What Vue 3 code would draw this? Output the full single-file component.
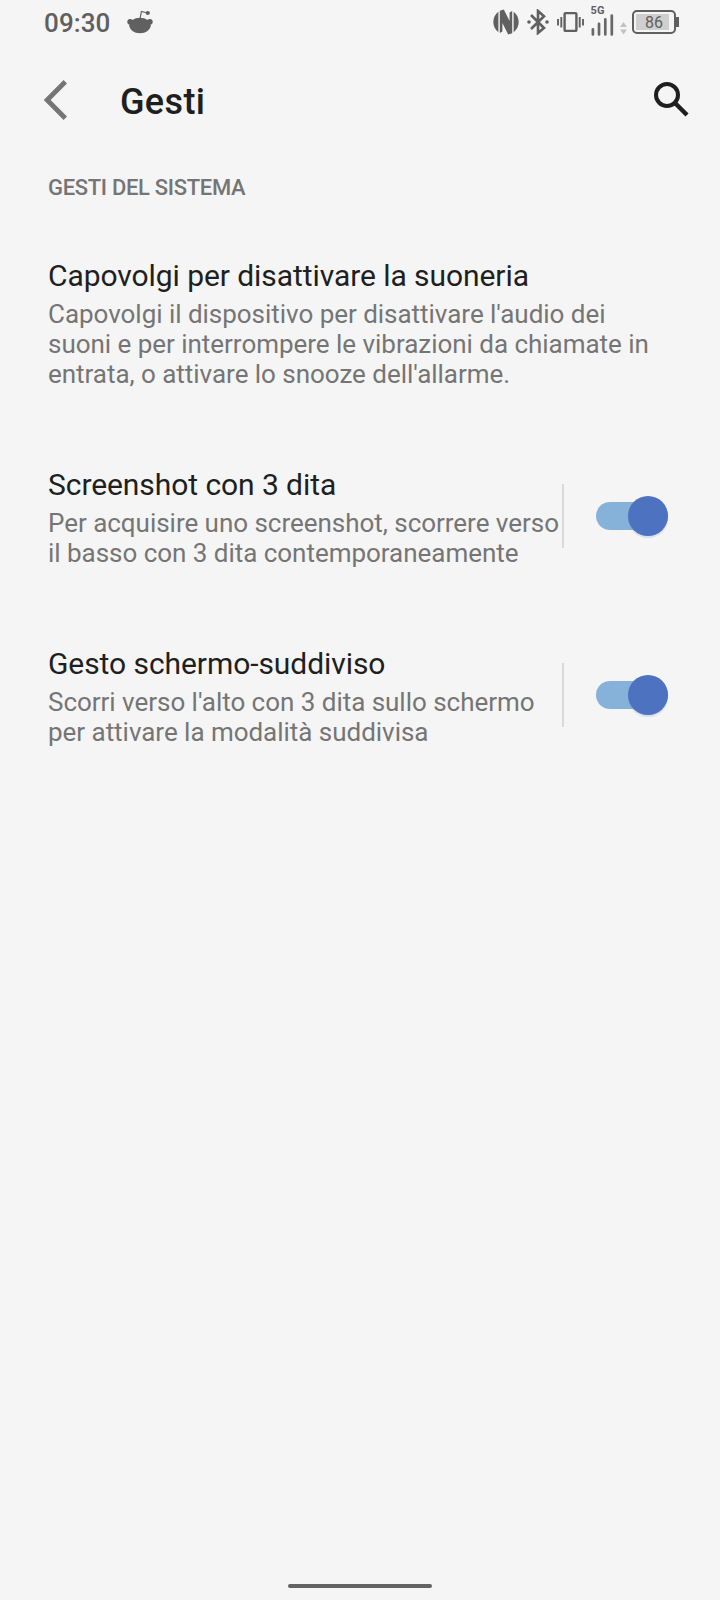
<template>
  <div class="screen">
    <header class="status-bar">
      <span class="clock">09:30</span>
      <svg class="reddit" width="26" height="24" viewBox="0 0 26 24">
        <path d="M13 9 L14.4 1.5 L20.5 3" fill="none" stroke="#606060" stroke-width="1.2" />
        <circle cx="20.8" cy="3" r="2.1" />
        <circle cx="3.2" cy="11.8" r="2.9" />
        <circle cx="22.8" cy="11.8" r="2.9" />
        <ellipse cx="13" cy="15.5" rx="10.8" ry="7.7" />
      </svg>

      <div class="status-icons">
        <svg width="26" height="26" viewBox="0 0 26 26">
          <path d="M5.4 2.8 A12.8 12.8 0 0 0 5.4 23.2 Z" />
          <path d="M20.6 2.8 A12.8 12.8 0 0 1 20.6 23.2 Z" />
          <path d="M6.8 1.8 L10.8 .5 L16.6 12 V3.5 L19.2 2 V24.2 L15.2 25.5 L9.4 14 V22.5 L6.8 24 Z" />
        </svg>
        <svg class="bluetooth" width="22" height="26" viewBox="0 0 22 26">
          <path
            d="M4 6 L17 19 L11 24 V2 L17 7.2 L4 20"
            fill="none" stroke="#606060" stroke-width="2.6"
          />
          <circle cx="2" cy="13" r="1.8" />
          <circle cx="20" cy="13" r="1.8" />
        </svg>
        <svg class="vibrate" width="27" height="26" viewBox="0 0 27 26">
          <rect x="7.6" y="4.1" width="11.8" height="17.8" rx="1" fill="none" stroke="#606060" stroke-width="2.4" />
          <path d="M1 10 V16.5 M4.3 8 V18.5 M22.7 8 V18.5 M26 10 V16.5" stroke="#606060" stroke-width="1.9" />
        </svg>
        <div class="signal">
          <span class="network">5G</span>
          <svg width="23" height="22" viewBox="0 0 23 22">
            <path d="M1.9 15.3 V20.5 M8 9.8 V20.5 M14.3 5.4 V20.5 M20.8 1.5 V20.5" stroke="#686868" stroke-width="2.7" stroke-linecap="round" />
          </svg>
        </div>
        <svg class="data" width="7" height="13" viewBox="0 0 7 13">
          <path d="M0 5 L3.5 0 L7 5 Z M0 7.5 H7 L3.5 12.5 Z" fill="#c2c2c2" />
        </svg>
        <div class="battery">
          <span class="level">86</span>
        </div>
        <span class="nub"></span>
      </div>
    </header>

    <nav class="toolbar">
      <svg width="24" height="40" viewBox="0 0 24 40">
        <path d="M21.3 1.7 L3.2 20 L21.3 38.3" fill="none" stroke="#757575" stroke-width="4.8" />
      </svg>
      <h1>Gesti</h1>
      <svg width="36" height="36" viewBox="0 0 36 36">
        <circle cx="13" cy="13" r="11" fill="none" stroke="#1f1f1f" stroke-width="4" />
        <path d="M20.5 20.5 L33 33" stroke="#1f1f1f" stroke-width="4.4" />
      </svg>
    </nav>

    <main>
      <h2>GESTI DEL SISTEMA</h2>
      <section v-for="item in gestures" :key="item.title" class="item">
        <div class="text">
          <h3>{{ item.title }}</h3>
          <p v-for="line in item.lines" :key="line">{{ line }}</p>
        </div>
        <div v-if="item.toggle" class="control">
          <button class="switch" :class="{ on: item.on }" @click="item.on = !item.on">
            <span class="thumb"></span>
          </button>
        </div>
      </section>
    </main>

    <div class="home-bar"></div>
  </div>
</template>

<script setup>
import { ref } from 'vue';

const gestures = ref([
  {
    title: 'Capovolgi per disattivare la suoneria',
    lines: [
      "Capovolgi il dispositivo per disattivare l'audio dei",
      'suoni e per interrompere le vibrazioni da chiamate in',
      "entrata, o attivare lo snooze dell'allarme."
    ],
    toggle: false
  },
  {
    title: 'Screenshot con 3 dita',
    lines: [
      'Per acquisire uno screenshot, scorrere verso',
      'il basso con 3 dita contemporaneamente'
    ],
    toggle: true,
    on: true
  },
  {
    title: 'Gesto schermo-suddiviso',
    lines: [
      "Scorri verso l'alto con 3 dita sullo schermo",
      'per attivare la modalità suddivisa'
    ],
    toggle: true,
    on: true
  }
]);
</script>

<style>
html, body {
  margin: 0;
  padding: 0;
  background: #f5f5f5;
}
</style>

<style scoped>
.screen {
  width: 720px;
  height: 1600px;
  display: flex;
  flex-direction: column;
  overflow: hidden;
  background: #f5f5f5;
  color: #1f1f1f;
  font-family: Roboto, sans-serif;
}

h1, h2, h3, p {
  margin: 0;
}

svg {
  display: block;
  flex: none;
}

.status-bar {
  display: flex;
  align-items: center;
  height: 44px;
  padding: 0 41px 0 44px;
  color: #606060;
  fill: #606060;
}

.clock {
  width: 83px;
  padding-top: 2px;
  font-size: 26px;
  line-height: 30px;
  font-weight: 500;
  letter-spacing: 0.1px;
}

.status-icons {
  display: flex;
  align-items: center;
  margin-left: auto;
}

.bluetooth {
  margin-left: 8px;
}

.vibrate {
  margin-left: 8px;
}

.signal {
  display: flex;
  flex-direction: column;
  height: 32px;
  margin: -3px 0 0 6.5px;
}

.network {
  height: 9px;
  font-size: 11px;
  line-height: 11px;
  font-weight: 700;
  letter-spacing: 0.2px;
}

.data {
  margin: 12px 5.5px 0 6px;
}

.battery {
  box-sizing: border-box;
  width: 44px;
  height: 24px;
  padding: 2px;
  border: 2px solid #606060;
  border-radius: 5px;
}

.level {
  display: block;
  width: 33px;
  height: 16px;
  padding-left: 3px;
  box-sizing: border-box;
  background: #cfcfcf;
  font-size: 16px;
  line-height: 18px;
  text-align: center;
}

.nub {
  width: 3px;
  height: 10px;
  background: #606060;
}

.toolbar {
  display: flex;
  align-items: center;
  height: 112px;
  padding: 0 30px 0 44px;
}

h1 {
  flex: 1;
  padding: 3px 0 0 52px;
  font-size: 36px;
  line-height: 44px;
  font-weight: 500;
  letter-spacing: 0.35px;
}

main {
  flex: 1;
  padding: 19px 48px 0;
}

h2 {
  height: 83px;
  color: #757575;
  font-size: 22px;
  line-height: 26px;
  font-weight: 500;
  letter-spacing: -0.32px;
}

.item {
  display: flex;
  align-items: center;
  margin-bottom: 78px;
}

.text {
  flex: 1;
  white-space: nowrap;
}

h3 {
  margin-bottom: 5px;
  font-size: 30px;
  line-height: 36px;
  font-weight: 400;
  letter-spacing: -0.07px;
}

p {
  color: #757575;
  font-size: 26px;
  line-height: 30px;
  letter-spacing: -0.03px;
}

.control {
  display: flex;
  align-items: center;
  height: 64px;
  margin-top: -3px;
  padding-left: 32px;
  border-left: 2px solid #d9d9d9;
}

.switch {
  display: flex;
  align-items: center;
  width: 72px;
  height: 28px;
  margin-right: 4px;
  padding: 0;
  border: none;
  border-radius: 14px;
  background: #bdbdbd;
}

.switch.on {
  justify-content: flex-end;
  background: #86b2da;
}

.thumb {
  flex: none;
  width: 40px;
  height: 40px;
  border-radius: 50%;
  background: #fafafa;
  box-shadow: 0 2px 1px rgba(76, 114, 192, 0.18);
}

.on .thumb {
  background: #4c72c0;
}

.home-bar {
  flex: none;
  align-self: center;
  width: 144px;
  height: 4px;
  margin-bottom: 12px;
  border-radius: 2px;
  background: #636363;
}
</style>
